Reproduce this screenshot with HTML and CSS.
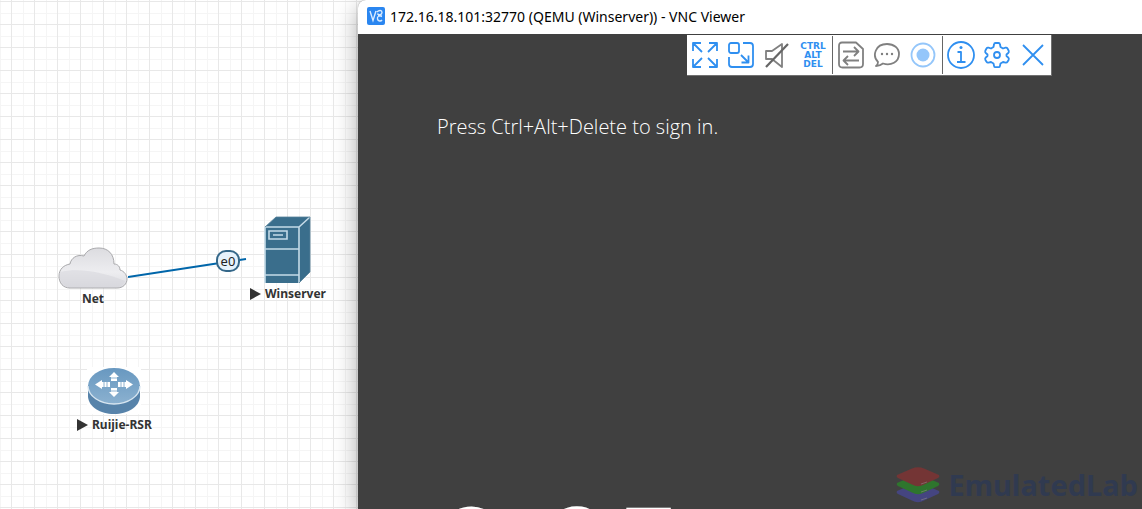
FILE: index.html
```html
<!DOCTYPE html>
<html lang="en">
<head>
    <meta charset="UTF-8">
    <meta name="viewport" content="width=device-width, initial-scale=1.0">
    <title>EmulatedLab</title>
    <link rel="stylesheet" href="styles.css">
</head>
<body>
    <main class="lab">
        <!-- Topology -->
        <svg class="link" width="130" height="30" viewBox="0 0 130 30">
            <path d="M0 23 L118 5" stroke="#0066aa" stroke-width="2"/>
        </svg>
        <span class="port">e0</span>

        <div class="node node-net">
            <svg width="70" height="42" viewBox="0 0 70 42">
                <defs>
                    <linearGradient id="cloud" x1="0" y1="0" x2="0" y2="1">
                        <stop offset="0" stop-color="#dcdce0"/>
                        <stop offset="0.6" stop-color="#ededf0"/>
                        <stop offset="1" stop-color="#dcdce1"/>
                    </linearGradient>
                </defs>
                <path d="M12 41 C5 41 1 36 1 29 C1 22 6 18 12 17 C13 11 19 7 26 9 C29 3 34 1 41 1 C50 1 56 7 56 17 C60 17 62 20 62 23 C66 24 69 28 69 32 C69 37 65 41 59 41 Z" fill="url(#cloud)" stroke="#a9a9ac"/>
                <path d="M2 25 C20 21 42 24 67 34 C65 38 63 40 59 40 H12 C5 40 0 33 2 25 Z" fill="#d3d3da" opacity="0.5"/>
            </svg>
            <div class="node-name">Net</div>
        </div>

        <div class="node node-server">
            <svg width="48" height="68" viewBox="0 0 48 68">
                <path d="M1 11 L12 1 H46 V56 L35 67 H1 Z" fill="#3a6e8c"/>
                <path d="M1 11 H35 V67 M35 11 L46 1 M1 33 H35 M1 59 H35 M1 11 V67 M5 15 H23 V23 H5 Z M9 19 H19" fill="none" stroke="#c5dbe8" stroke-width="1.6"/>
                <path d="M1 11 L12 1 H46 V56 L35 67" fill="none" stroke="#568199" stroke-width="0.8"/>
            </svg>
            <div class="node-name"><span class="play"></span>Winserver</div>
        </div>

        <div class="node node-router">
            <svg width="54" height="48" viewBox="0 0 54 48">
                <defs>
                    <linearGradient id="disc" x1="0" y1="0" x2="0" y2="1">
                        <stop offset="0" stop-color="#6898c0"/>
                        <stop offset="1" stop-color="#8bb1d0"/>
                    </linearGradient>
                </defs>
                <rect width="54" height="47" fill="#fff"/>
                <path d="M1 18 V30 C2 40 13 47 27 47 S52 40 53 30 V18 Z" fill="#5783aa"/>
                <ellipse cx="27" cy="19" rx="26" ry="18" fill="url(#disc)"/>
                <path d="M1 19 C1 29 13 37 27 37 S53 29 53 19" fill="none" stroke="#d7e5f0" stroke-width="1.4"/>
                <path d="M27 5 L32 10 H30 V14 H24 V10 H22 Z M27 30 L22 25 H24 V21 H30 V25 H32 Z M8 17.500 L15 13 V15 H23 V20 H15 V22 Z M46 17.500 L39 13 V15 H31 V20 H39 V22 Z" fill="#fff"/>
                <path d="M24 11 H30 M24 24 H30 M17 15 V20 M20 15 V20 M34 15 V20 M37 15 V20" stroke="#8eb2cf"/>
            </svg>
            <div class="node-name"><span class="play"></span>Ruijie-RSR</div>
        </div>

        <!-- VNC window -->
        <section class="vnc">
            <header class="titlebar">
                <svg width="18" height="18" viewBox="0 0 18 18">
                    <rect width="18" height="18" rx="2" fill="#2a86f0"/>
                    <path d="M3 4 L6 13.500 L9 4 M10 5 C12 3 15 3 15 5.500 C15 8 11 8.500 10.500 6.500 M15 9.500 C12 8 10 9.500 10.500 12 C11 14.500 14 14.500 15 13 M11 9 H15" fill="none" stroke="#d9ebff" stroke-width="1.400"/>
                </svg>
                <h1>172.16.18.101:32770 (QEMU (Winserver)) - VNC Viewer</h1>
            </header>

            <div class="screen">
                <div class="toolbar">
                    <button type="button" aria-label="Full screen">
                        <svg viewBox="0 0 28 28"><path d="M2 10 V2 H10 M2 2 L11 11 M18 2 H26 V10 M26 2 L17 11 M2 18 V26 H10 M2 26 L11 17 M18 26 H26 V18 M26 26 L17 17"/></svg>
                    </button>
                    <button type="button" aria-label="Scale">
                        <svg viewBox="0 0 28 28"><rect x="2" y="2" width="10" height="10" rx="2"/><path d="M16 2 H23 Q26 2 26 5 V23 Q26 26 23 26 H5 Q2 26 2 23 V16 M14 14 L21 21 M21.500 14.500 V21.500 H14.500"/></svg>
                    </button>
                    <button type="button" class="gray" aria-label="Mute">
                        <svg viewBox="0 0 28 28"><path d="M3 10 H9 L19 3 V26 L9 18 H3 Z"/><path class="slash" d="M3 26 L25 3"/></svg>
                    </button>
                    <button type="button" class="keys">CTRL<br>ALT<br>DEL</button>
                    <span class="divider"></span>
                    <button type="button" class="gray" aria-label="Transfer files">
                        <svg viewBox="0 0 28 28"><path d="M5 1.500 H19 L26 8 V23 Q26 26.500 22.500 26.500 H5.500 Q2 26.500 2 23 V5 Q2 1.500 5 1.500 Z M6 10.500 H21 M17 6 L21.500 10.500 L17 15 M22 19.500 H7 M11 15 L6.500 19.500 L11 24"/></svg>
                    </button>
                    <button type="button" class="gray" aria-label="Chat">
                        <svg viewBox="0 0 28 28"><path d="M5 21 C-1 15 2 3 14 3 C21 3 26 7 26 13 C26 21 18 25 10 22.500 C8 24 6 25 3 25 C4.500 24 5 23 5 21 Z"/><path class="dots" d="M9 13 h0.010 M14 13 h0.010 M19 13 h0.010"/></svg>
                    </button>
                    <button type="button" class="record" aria-label="Record">
                        <svg viewBox="0 0 28 28"><circle cx="14" cy="14" r="11.500"/><circle class="dot" cx="14" cy="14" r="6.500"/></svg>
                    </button>
                    <span class="divider"></span>
                    <button type="button" aria-label="Information">
                        <svg viewBox="0 0 28 28"><circle cx="14" cy="14" r="13"/><path d="M10.500 11 H14 V21 M10 21 H18.500"/><circle class="mark" cx="14" cy="6.500" r="1.500"/></svg>
                    </button>
                    <button type="button" aria-label="Settings">
                        <svg viewBox="0 0 28 28"><path d="M12.500 2 H15.500 Q16.800 2 17 3.500 L17.500 6 L20 7.500 L22.500 6.700 Q23.800 6.300 24.500 7.500 L25.700 9.700 Q26.200 11 25.200 12 L23.500 13.500 V15 L25.200 16.500 Q26.200 17.500 25.700 18.700 L24.500 20.800 Q23.800 22 22.500 21.600 L20 21 L17.500 22.500 L17 24.800 Q16.800 26.200 15.500 26.200 H12.500 Q11.200 26.200 11 24.800 L10.500 22.500 L8 21 L5.500 21.600 Q4.200 22 3.500 20.800 L2.300 18.700 Q1.800 17.500 2.800 16.500 L4.500 15 V13.500 L2.800 12 Q1.800 11 2.300 9.700 L3.500 7.500 Q4.200 6.300 5.500 6.700 L8 7.500 L10.500 6 L11 3.500 Q11.200 2 12.500 2 Z"/><circle cx="14" cy="14" r="3"/></svg>
                    </button>
                    <button type="button" aria-label="Close">
                        <svg viewBox="0 0 28 28"><path d="M4 4 L24 24 M24 4 L4 24"/></svg>
                    </button>
                </div>

                <p class="prompt">Press Ctrl+Alt+Delete to sign in.</p>
                <div class="clock">9:05</div>
            </div>
        </section>

        <div class="watermark">
            <svg width="44" height="36" viewBox="0 0 44 36">
                <path d="M1 24 L16 17.500 Q22 15 28 17.500 L43 24 Q44 26 42 27 L28 33.500 Q22 37 16 33.500 L2 27 Q0 26 1 24 Z" fill="#454580"/>
                <path d="M1 16 L16 9.500 Q22 7 28 9.500 L43 16 Q44 18 42 19 L28 25.500 Q22 29 16 25.500 L2 19 Q0 18 1 16 Z" fill="#2e752d"/>
                <path d="M1 8 L16 1.500 Q22 -1 28 1.500 L43 8 Q44 10 42 11 L28 17.500 Q22 21 16 17.500 L2 11 Q0 10 1 8 Z" fill="#743535"/>
                <path d="M25 17 L31 15 M25 25 L31 23 M25 33 L31 31" stroke="#8c8585" stroke-width="1" opacity="0.6"/>
            </svg>
            <span>EmulatedLab</span>
        </div>
    </main>
</body>
</html>
```
FILE: styles.css
```css
:root {
    --blue: #2f8ff0;
    --gray: #808080;
    --screen: #404040;
}

* {
    box-sizing: border-box;
}

body {
    margin: 0;
    font-family: "Noto Sans", sans-serif;
}

.lab {
    position: relative;
    height: 100vh;
    overflow: hidden;
    background-color: #fff;
    background-image:
        linear-gradient(#e8e8e8 1px, transparent 1px),
        linear-gradient(90deg, #e8e8e8 1px, transparent 1px),
        linear-gradient(#f5f5f5 1px, transparent 1px),
        linear-gradient(90deg, #f5f5f5 1px, transparent 1px);
    background-size: 23px 23px;
    background-position: 0 1px, 11px 0, 0 13px, 0 0;
}

/* Nodes on the canvas */
.node {
    position: absolute;
    display: flex;
    flex-direction: column;
    align-items: center;
}

.node svg {
    display: block;
}

.node-net {
    left: 58px;
    top: 247px;
}

.node-server {
    left: 250px;
    top: 216px;
}

.node-router {
    left: 77px;
    top: 367px;
}

.node-name {
    display: flex;
    align-items: center;
    gap: 4px;
    font-size: 12px;
    line-height: 19px;
    font-weight: 700;
    color: #333;
    white-space: nowrap;
}

.play {
    border-left: 11px solid #333;
    border-top: 6px solid transparent;
    border-bottom: 6px solid transparent;
}

.link {
    position: absolute;
    left: 128px;
    top: 254px;
}

.port {
    position: absolute;
    left: 216px;
    top: 250px;
    width: 24px;
    height: 22px;
    border: 2px solid #346789;
    border-radius: 10px;
    background: #e6f2fc;
    color: #222;
    font-size: 13px;
    line-height: 18px;
    text-align: center;
}

/* VNC window */
.vnc {
    position: absolute;
    left: 358px;
    top: 0;
    right: 0;
    bottom: 0;
    display: flex;
    flex-direction: column;
    border-top-left-radius: 8px;
    overflow: hidden;
    background: #fff;
    box-shadow: 0 0 1px #777, 0 8px 24px rgba(0, 0, 0, 0.35);
}

.titlebar {
    display: flex;
    align-items: center;
    gap: 5px;
    height: 34px;
    padding: 0 9px 2px;
}

.titlebar h1 {
    margin: 0;
    font-size: 14px;
    font-weight: 400;
    color: #000;
    white-space: nowrap;
}

.screen {
    position: relative;
    flex: 1;
    padding: 78px 0 0 79px;
    background: var(--screen);
    color: #fff;
    overflow: hidden;
}

.toolbar {
    position: absolute;
    left: 329px;
    top: 1px;
    display: flex;
    height: 41px;
    background: #fff;
    border-bottom: 1px solid #707070;
    border-right: 1px solid #707070;
}

.toolbar button {
    display: flex;
    align-items: center;
    justify-content: center;
    width: 36px;
    padding: 0;
    border: none;
    background: none;
    color: var(--blue);
    cursor: pointer;
}

.toolbar .gray {
    color: var(--gray);
}

.toolbar .record {
    color: #94c6fa;
}

.toolbar svg {
    width: 28px;
    height: 28px;
    fill: none;
    stroke: currentColor;
    stroke-width: 1.8;
    stroke-linejoin: round;
}

.toolbar .slash {
    stroke: #666;
    stroke-width: 2.2;
}

.toolbar .dots {
    stroke-width: 2.4;
    stroke-linecap: round;
}

.toolbar .dot,
.toolbar .mark {
    fill: currentColor;
    stroke: none;
}

.toolbar .keys {
    font-family: "DejaVu Sans", sans-serif;
    font-size: 9px;
    line-height: 9px;
    font-weight: 700;
}

.divider {
    width: 1px;
    margin: 1px 0 1px 1px;
    background: #666;
}

.prompt {
    margin: 0;
    font-family: "Open Sans", sans-serif;
    font-size: 20px;
    line-height: 30px;
    font-weight: 350;
}

.clock {
    margin-top: 344px;
    font-family: "Open Sans", sans-serif;
    font-size: 125px;
    line-height: 125px;
    white-space: nowrap;
}

.watermark {
    position: absolute;
    right: 4px;
    bottom: 4px;
    display: flex;
    align-items: center;
    gap: 8px;
    color: #303a50;
    font-size: 29px;
    line-height: 40px;
    font-weight: 700;
}
```
